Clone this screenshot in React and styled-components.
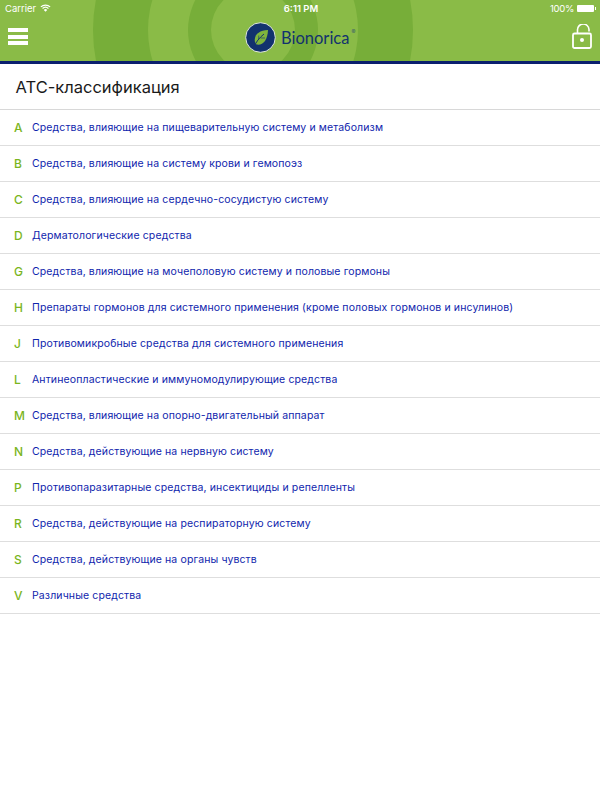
import styled, { createGlobalStyle } from 'styled-components'

const GlobalStyle = createGlobalStyle`
  html, body {
    margin: 0;
    padding: 0;
    background: #ffffff;
  }
`

const items = [
  ['A', 'Средства, влияющие на пищеварительную систему и метаболизм'],
  ['B', 'Средства, влияющие на систему крови и гемопоэз'],
  ['C', 'Средства, влияющие на сердечно-сосудистую систему'],
  ['D', 'Дерматологические средства'],
  ['G', 'Средства, влияющие на мочеполовую систему и половые гормоны'],
  ['H', 'Препараты гормонов для системного применения (кроме половых гормонов и инсулинов)'],
  ['J', 'Противомикробные средства для системного применения'],
  ['L', 'Антинеопластические и иммуномодулирующие средства'],
  ['M', 'Средства, влияющие на опорно-двигательный аппарат'],
  ['N', 'Средства, действующие на нервную систему'],
  ['P', 'Противопаразитарные средства, инсектициды и репелленты'],
  ['R', 'Средства, действующие на респираторную систему'],
  ['S', 'Средства, действующие на органы чувств'],
  ['V', 'Различные средства'],
]

export default function App() {
  return (
    <Page>
      <GlobalStyle />
      <Header>
        <Rings width="600" height="61" viewBox="0 0 600 61">
          <circle cx="253" cy="30" r="160" fill="#77ae39" />
          <circle cx="253" cy="30" r="105" fill="#8abb47" />
          <circle cx="253" cy="30" r="65" fill="#77ae39" />
          <circle cx="253" cy="30" r="42" fill="#8abb47" />
        </Rings>
        <StatusBar>
          <StatusSide>
            <span>Carrier</span>
            <svg width="11" height="8" viewBox="0 0 12 9">
              <path d="M0.8 3.2 A7.6 7.6 0 0 1 11.2 3.2" stroke="#fff" strokeWidth="1.4" fill="none" />
              <path d="M2.7 5 A4.9 4.9 0 0 1 9.3 5" stroke="#fff" strokeWidth="1.4" fill="none" />
              <path d="M4.1 6.7 A2.6 2.6 0 0 1 7.9 6.7 L6 8.7 Z" fill="#fff" />
            </svg>
          </StatusSide>
          <Clock>6:11 PM</Clock>
          <StatusSide>
            <BatteryText>100%</BatteryText>
            <Battery>
              <BatteryNub />
            </Battery>
          </StatusSide>
        </StatusBar>
        <NavBar>
          <Burger>
            <i />
            <i />
            <i />
          </Burger>
          <Logo>
            <svg width="31" height="31" viewBox="0 0 31 31">
              <circle cx="15.5" cy="15.5" r="14.8" fill="#12326e" stroke="#dfe8d8" strokeWidth="1" />
              <path d="M23 8 C15 8.5 10.5 11.5 9.8 17 C9.5 19.5 10.2 21.5 11.5 22.5 C18 23.5 22.5 18.5 23 8 Z" fill="#7fb53c" />
              <path d="M9 25 C11 20 14 16 19 12" stroke="#12326e" strokeWidth="1" fill="none" />
              <path d="M13.5 18 L13.8 13.5 M15.5 16 L20 16" stroke="#12326e" strokeWidth="0.6" fill="none" />
            </svg>
            <LogoName>Bionorica</LogoName>
            <LogoMark>®</LogoMark>
          </Logo>
          <Lock width="20" height="25" viewBox="0 0 20 25">
            <path d="M5.5 9 V6 A5.7 5.7 0 0 1 17 5.5 V7.5" stroke="#fff" strokeWidth="1.6" fill="none" />
            <rect x="1" y="9.5" width="18" height="14.5" rx="1.5" stroke="#fff" strokeWidth="1.8" fill="none" />
            <circle cx="10" cy="16" r="2" fill="#fff" />
          </Lock>
        </NavBar>
      </Header>
      <Title>АТС-классификация</Title>
      <List>
        {items.map(([code, label]) => (
          <Row key={code}>
            <Code>{code}</Code>
            <Label>{label}</Label>
          </Row>
        ))}
      </List>
    </Page>
  )
}

const Page = styled.div`
  width: 600px;
  height: 800px;
  overflow: hidden;
  background: #ffffff;
  font-family: 'Inter', 'Liberation Sans', sans-serif;
`

const Header = styled.header`
  position: relative;
  height: 61px;
  background: #8abb47;
  border-bottom: 3px solid #0b1f6e;
  overflow: hidden;
`

const Rings = styled.svg`
  position: absolute;
  left: 0;
  top: 0;
`

const StatusBar = styled.div`
  position: relative;
  height: 16px;
  padding: 0 3px 0 5px;
  display: flex;
  align-items: center;
  justify-content: space-between;
  color: #ffffff;
  font-size: 9.5px;
`

const StatusSide = styled.div`
  width: 130px;
  display: flex;
  align-items: center;
  gap: 4px;

  &:last-child {
    justify-content: flex-end;
    gap: 3px;
  }
`

const Clock = styled.span`
  font-weight: 600;
`

const BatteryText = styled.span`
  letter-spacing: -0.3px;
`

const Battery = styled.div`
  position: relative;
  width: 17px;
  height: 7px;
  margin-right: 3px;
  background: #ffffff;
  border-radius: 1px;
`

const BatteryNub = styled.div`
  position: absolute;
  right: -2px;
  top: 2px;
  width: 1.5px;
  height: 3px;
  background: #ffffff;
`

const NavBar = styled.div`
  position: relative;
  height: 41px;
  padding: 0 8px;
  display: flex;
  align-items: center;
`

const Burger = styled.div`
  width: 20px;
  display: flex;
  flex-direction: column;
  gap: 2.5px;

  i {
    display: block;
    height: 4px;
    background: #ffffff;
  }
`

const Logo = styled.div`
  margin: 2px 0 0 217px;
  display: flex;
  align-items: center;
  gap: 5px;
`

const LogoName = styled.span`
  color: #12326e;
  font-family: 'Lato', 'Liberation Sans', sans-serif;
  font-size: 16.5px;
`

const LogoMark = styled.span`
  color: #3d5f6a;
  font-size: 6px;
  margin: -12px 0 0 -3px;
`

const Lock = styled.svg`
  margin-left: auto;
`

const Title = styled.h1`
  margin: 0;
  height: 46px;
  box-sizing: border-box;
  padding-left: 15.5px;
  display: flex;
  align-items: center;
  color: #1a1a1a;
  font-size: 16.5px;
  font-weight: 400;
  border-bottom: 1px solid #d8d8d8;
`

const List = styled.div`
  display: flex;
  flex-direction: column;
`

const Row = styled.div`
  height: 36px;
  box-sizing: border-box;
  display: flex;
  align-items: center;
  border-bottom: 1px solid #dedede;
`

const Code = styled.span`
  width: 32px;
  padding-left: 14px;
  box-sizing: border-box;
  color: #7ab51d;
  font-size: 12px;
  font-weight: 500;
`

const Label = styled.span`
  color: #0f25ad;
  font-size: 10.5px;
  letter-spacing: 0.12px;
`
